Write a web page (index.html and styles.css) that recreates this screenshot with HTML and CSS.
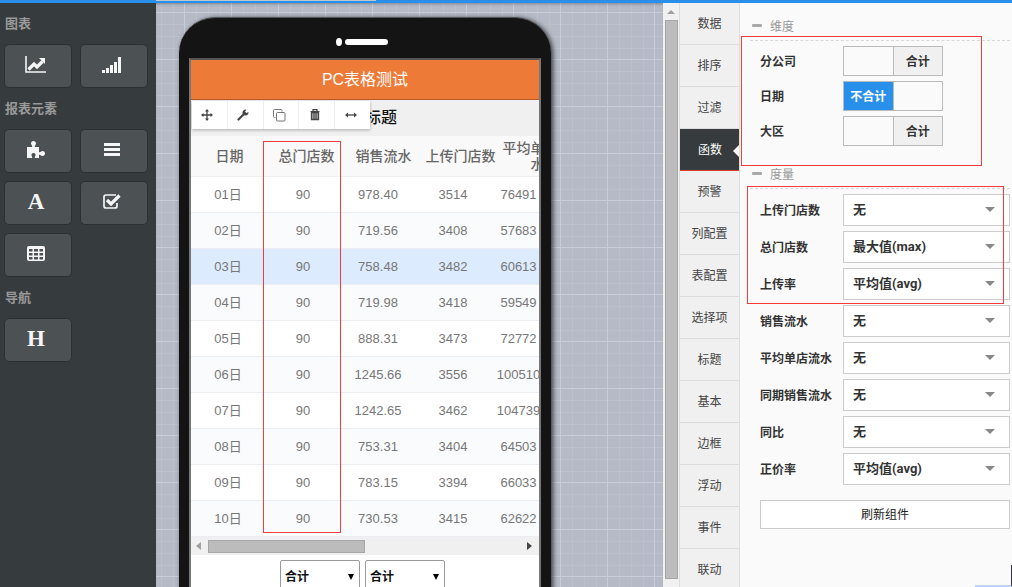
FILE: index.html
```html
<!DOCTYPE html>
<html lang="zh-CN">
<head>
<meta charset="utf-8">
<title>PC表格测试</title>
<link rel="stylesheet" href="styles.css">
</head>
<body>
<div class="topbar"><div class="topbar-progress"></div></div>
<div class="app">
  <aside class="sidebar">
    <h2 class="side-title">图表</h2>
    <div class="tools">
      <button class="tool" aria-label="折线图"><svg width="22" height="18" viewBox="0 0 22 18"><path d="M1 0v16h20" fill="none" stroke="#f5f5f5" stroke-width="1.6"/><path d="M3.500 13.500L9 8l3 3 5.500-5.500" fill="none" stroke="#f5f5f5" stroke-width="3.200"/><path d="M14 2h6v6z" fill="#f5f5f5"/></svg></button>
      <button class="tool" aria-label="柱状图"><svg width="20" height="18" viewBox="0 0 20 18" fill="#f5f5f5"><path d="M0 14h3v3H0zM4 12h3v5H4zM8 9h3v8H8zM12 6h3v11h-3zM16 1h3v16h-3z"/></svg></button>
    </div>
    <h2 class="side-title">报表元素</h2>
    <div class="tools">
      <button class="tool" aria-label="组件"><svg width="20" height="18" viewBox="0 0 20 18" fill="#f5f5f5"><path d="M1 6h5c1-1-1-2-1-3.500C5 1 6 0 7.500 0S10 1 10 2.500C10 4 8 5 9 6h4v5c1 1 2-1 3.500-1C18 10 19 11 19 12.500S18 15 16.500 15C15 15 14 13 13 14v3H9c-1-1 1-2 .5-3.500C9 11.500 6 11.500 5.500 13.500 5 15 7 16 6 17H1z"/></svg></button>
      <button class="tool" aria-label="列表"><svg width="18" height="16" viewBox="0 0 18 16" fill="#f5f5f5"><path d="M1 1h16v3H1zM1 6h16v3H1zM1 11h16v3H1z"/></svg></button>
      <button class="tool tool-glyph">A</button>
      <button class="tool" aria-label="选择"><svg width="20" height="18" viewBox="0 0 20 18"><path d="M14 2H4Q2 2 2 4v9q0 2 2 2h9q2 0 2-2v-3" fill="none" stroke="#f5f5f5" stroke-width="1.700"/><path d="M5 7l4 4 8.500-8.500" fill="none" stroke="#f5f5f5" stroke-width="3.200"/></svg></button>
      <button class="tool" aria-label="表格"><svg width="18" height="16" viewBox="0 0 18 16"><rect x="0" y="0" width="18" height="15" rx="2" fill="#f5f5f5"/><path d="M2 3h3.500v2.500H2zM7 3h4v2.500H7zM12.500 3H16v2.500h-3.500zM2 7h3.500v2.500H2zM7 7h4v2.500H7zM12.500 7H16v2.500h-3.500zM2 11h3.500v2.500H2zM7 11h4v2.500H7zM12.500 11H16v2.500h-3.500z" fill="#4c5154"/></svg></button>
    </div>
    <h2 class="side-title">导航</h2>
    <div class="tools">
      <button class="tool tool-glyph">H</button>
    </div>
  </aside>

  <main class="canvas">
    <div class="phone">
      <div class="speaker"><span class="speaker-dot"></span><span class="speaker-bar"></span></div>
      <div class="screen">
        <h1 class="page-title">PC表格测试</h1>
        <div class="widget">
          <div class="widget-title">标题</div>
          <div class="toolbar">
            <button aria-label="移动"><svg width="14" height="14" viewBox="0 0 14 14"><path d="M7 2v10M2 7h10" stroke="#444" stroke-width="1.300"/><path d="M7 1l2 2.500H5zM7 13l2-2.500H5zM1 7l2.500-2v4zM13 7l-2.500-2v4z" fill="#444"/></svg></button>
            <button aria-label="设置"><svg width="12" height="12" viewBox="0 0 12 12"><path d="M1.500 10.500L7 5" stroke="#444" stroke-width="2.200" stroke-linecap="round"/><path d="M9.500 .8A3 3 0 1 0 11.400 3L9.500 4 8 2.500z" fill="#444"/></svg></button>
            <button aria-label="复制"><svg width="14" height="14" viewBox="0 0 14 14" fill="none" stroke="#777"><path d="M3.500 9.500H2.500Q1.500 9.500 1.500 8.500V2.500Q1.500 1.500 2.500 1.500h6.500q1 0 1 1v1"/><rect x="4.500" y="4.500" width="8.500" height="8.500" rx="1" fill="#fff"/></svg></button>
            <button aria-label="删除"><svg width="10" height="12" viewBox="0 0 10 12"><path d="M3 2V.7h4V2M.5 2.500h9" fill="none" stroke="#444" stroke-width="1.200"/><path d="M1.500 3.500h7V10.500h-7z" fill="#aaa" stroke="#444" stroke-width="1.300"/><path d="M4 4v6M6 4v6" stroke="#444"/></svg></button>
            <button aria-label="宽度"><svg width="12" height="8" viewBox="0 0 12 8"><path d="M2 4h8" stroke="#444" stroke-width="1.300"/><path d="M0 4l3-2.500v5zM12 4L9 1.500v5z" fill="#444"/></svg></button>
          </div>
          <table class="grid grid-head">
            <thead><tr><th>日期</th><th>总门店数</th><th>销售流水</th><th>上传门店数</th><th>平均单店流水</th></tr></thead>
          </table>
          <table class="grid grid-body">
            <tbody>
              <tr><td>01日</td><td>90</td><td>978.40</td><td>3514</td><td>76491</td></tr>
              <tr><td>02日</td><td>90</td><td>719.56</td><td>3408</td><td>57683</td></tr>
              <tr class="selected"><td>03日</td><td>90</td><td>758.48</td><td>3482</td><td>60613</td></tr>
              <tr><td>04日</td><td>90</td><td>719.98</td><td>3418</td><td>59549</td></tr>
              <tr><td>05日</td><td>90</td><td>888.31</td><td>3473</td><td>72772</td></tr>
              <tr><td>06日</td><td>90</td><td>1245.66</td><td>3556</td><td>100510</td></tr>
              <tr><td>07日</td><td>90</td><td>1242.65</td><td>3462</td><td>104739</td></tr>
              <tr><td>08日</td><td>90</td><td>753.31</td><td>3404</td><td>64503</td></tr>
              <tr><td>09日</td><td>90</td><td>783.15</td><td>3394</td><td>66033</td></tr>
              <tr><td>10日</td><td>90</td><td>730.53</td><td>3415</td><td>62622</td></tr>
            </tbody>
          </table>
          <div class="hscroll"><span class="arrow arrow-left"></span><div class="hscroll-track"><div class="hscroll-thumb"></div></div><span class="arrow arrow-right"></span></div>
          <div class="mark mark-column"></div>
        </div>
        <div class="filters">
          <div class="picker"><select aria-label="汇总一"><option>合计</option></select></div>
          <div class="picker"><select aria-label="汇总二"><option>合计</option></select></div>
        </div>
      </div>
    </div>
  </main>

  <div class="vscroll"><span class="arrow arrow-up"></span><div class="vscroll-thumb"></div></div>

  <nav class="tabs">
    <button class="tab">数据</button>
    <button class="tab">排序</button>
    <button class="tab">过滤</button>
    <button class="tab active">函数</button>
    <button class="tab">预警</button>
    <button class="tab">列配置</button>
    <button class="tab">表配置</button>
    <button class="tab">选择项</button>
    <button class="tab">标题</button>
    <button class="tab">基本</button>
    <button class="tab">边框</button>
    <button class="tab">浮动</button>
    <button class="tab">事件</button>
    <button class="tab">联动</button>
  </nav>

  <section class="panel">
    <div class="group group-dims">
      <h3 class="group-title">维度</h3>
      <div class="row"><span class="row-label">分公司</span><label class="toggle"><input type="checkbox" aria-label="分公司"><span class="on"></span><span class="off">合计</span></label></div>
      <div class="row"><span class="row-label">日期</span><label class="toggle"><input type="checkbox" aria-label="日期" checked><span class="on">不合计</span><span class="off"></span></label></div>
      <div class="row"><span class="row-label">大区</span><label class="toggle"><input type="checkbox" aria-label="大区"><span class="on"></span><span class="off">合计</span></label></div>
      <div class="mark mark-dims"></div>
    </div>
    <div class="group group-measures">
      <h3 class="group-title">度量</h3>
      <div class="row"><label class="row-label" for="m1">上传门店数</label><div class="choice"><select id="m1"><option>无</option></select></div></div>
      <div class="row"><label class="row-label" for="m2">总门店数</label><div class="choice"><select id="m2"><option>最大值(max)</option></select></div></div>
      <div class="row"><label class="row-label" for="m3">上传率</label><div class="choice"><select id="m3"><option>平均值(avg)</option></select></div></div>
      <div class="row"><label class="row-label" for="m4">销售流水</label><div class="choice"><select id="m4"><option>无</option></select></div></div>
      <div class="row"><label class="row-label" for="m5">平均单店流水</label><div class="choice"><select id="m5"><option>无</option></select></div></div>
      <div class="row"><label class="row-label" for="m6">同期销售流水</label><div class="choice"><select id="m6"><option>无</option></select></div></div>
      <div class="row"><label class="row-label" for="m7">同比</label><div class="choice"><select id="m7"><option>无</option></select></div></div>
      <div class="row"><label class="row-label" for="m8">正价率</label><div class="choice"><select id="m8"><option>平均值(avg)</option></select></div></div>
      <div class="mark mark-measures"></div>
    </div>
    <button class="refresh">刷新组件</button>
    <div class="corner"></div>
  </section>
</div>
</body>
</html>
```

FILE: styles.css
```css
* { box-sizing: border-box; }

body {
  margin: 0;
  height: 100vh;
  overflow: hidden;
  display: flex;
  flex-direction: column;
  font-family: "Liberation Sans", "Noto Sans CJK SC", sans-serif;
  font-size: 12px;
  color: #333;
}

button, select, input { font: inherit; color: inherit; margin: 0; }
button { padding: 0; border: 0; background: none; }
h1, h2, h3 { margin: 0; }

.topbar { height: 3px; background: #2890ea; flex: none; padding-left: 156px; }
.topbar-progress { width: 220px; height: 1px; background: #c4c8cc; }
.app { flex: 1; min-height: 0; display: flex; }

/* left palette */
.sidebar { width: 156px; flex: none; background: #363b3e; padding: 0 4px; }
.side-title {
  height: 41px;
  line-height: 42px;
  padding-left: 1px;
  font-size: 13px;
  font-weight: bold;
  color: #999;
}
.tools { display: grid; grid-template-columns: 68px 68px; gap: 8px; }
.tool {
  height: 44px;
  padding: 0 4px 2px 0;
  display: flex;
  align-items: center;
  justify-content: center;
  background: #4c5154;
  border: 1px solid #2c3033;
  border-radius: 5px;
}
.tool-glyph {
  font-family: "Liberation Serif", serif;
  font-size: 23px;
  font-weight: bold;
  color: #f5f5f5;
}

/* design surface */
.canvas {
  flex: 1;
  min-width: 0;
  overflow: hidden;
  padding: 14px 0 0 23px;
  background-color: #b5bac6;
  background-image:
    linear-gradient(#c8cddb 1px, transparent 1px),
    linear-gradient(90deg, #c8cddb 1px, transparent 1px),
    repeating-linear-gradient(#bbc0cb 0 1px, transparent 1px 12px),
    repeating-linear-gradient(90deg, #bbc0cb 0 1px, transparent 1px 12px);
  background-size: 47px 47px;
  background-position: 28px 9px;
  box-shadow: inset 0 3px 3px -2px rgba(0, 0, 0, 0.3);
}
.phone {
  width: 372px;
  height: 700px;
  padding: 0 10px;
  background: #141414;
  border: 1px solid #555;
  border-width: 1px 0;
  border-radius: 36px;
  box-shadow: 2px 1px 5px rgba(0, 0, 0, 0.7);
}
.speaker {
  height: 40px;
  padding: 8px 7px 0 0;
  display: flex;
  align-items: center;
  justify-content: center;
  gap: 3px;
}
.speaker-dot { width: 6px; height: 8px; border-radius: 50%; background: #fff; }
.speaker-bar { width: 43px; height: 6px; border-radius: 3px; background: #fff; }
.screen { border: 2px solid #777; border-top-color: #555; background: #fff; height: 640px; }
.page-title {
  height: 40px;
  line-height: 40px;
  background: #ee7a38;
  border-bottom: 1px solid #b65c28;
  color: #fff;
  font-size: 16px;
  font-weight: normal;
  text-align: center;
}
.widget { position: relative; overflow: hidden; }
.widget-title {
  height: 36px;
  line-height: 36px;
  padding-left: 174px;
  background: #f0f0f0;
  color: #111;
  font-size: 16px;
  font-weight: 500;
}
.toolbar {
  position: absolute;
  top: 1px;
  left: 1px;
  width: 178px;
  height: 28px;
  display: flex;
  background: #fff;
  box-shadow: 0 1px 3px rgba(0, 0, 0, 0.3);
}
.toolbar button {
  flex: 1;
  display: flex;
  align-items: center;
  justify-content: center;
  padding-right: 4px;
}
.toolbar button + button { border-left: 1px solid #eee; }

.grid { border-collapse: separate; border-spacing: 0; table-layout: fixed; }
.grid-head { width: 385px; background: #f9f9f9; }
.grid-head th {
  height: 41px;
  padding: 0;
  border-bottom: 1px solid #eee;
  font-size: 14px;
  line-height: 16px;
  font-weight: 500;
  color: #666;
}
.grid-body { width: 356px; }
.grid-body td {
  width: 75px;
  height: 36px;
  padding: 0 1px 0 0;
  border-bottom: 1px solid #eaeef2;
  font-size: 13px;
  line-height: 16px;
  color: #777;
  text-align: center;
}
.grid-body td:last-child { width: 56px; }
.grid-body tr:nth-child(even) { background: #fafbfd; }
.grid-body tr.selected { background: #dcebfd; }

.hscroll { height: 18px; display: flex; align-items: center; background: #f0f0f0; padding: 0 7px 0 5px; }
.hscroll-track { flex: 1; padding-left: 7px; }
.hscroll-thumb { width: 157px; height: 13px; background: #bcbcbc; border: 1px solid #a6a6a6; }
.arrow { width: 0; height: 0; border: 4px solid transparent; }
.arrow-left { border-right: 5px solid #a0a0a0; border-left: 0; }
.arrow-right { border-left: 5px solid #444; border-right: 0; }
.arrow-up { border-bottom-color: #a0a0a0; border-top: 0; }

.filters { display: flex; justify-content: center; gap: 5px; padding: 5px 5px 0 0; }
.picker { position: relative; }
.picker select {
  display: block;
  appearance: none;
  width: 80px;
  height: 34px;
  padding: 0 4px;
  border: 1px solid #999;
  border-radius: 2px;
  background: #fff;
  color: #111;
  font-weight: bold;
}
.picker::after, .choice::after {
  content: "";
  position: absolute;
  pointer-events: none;
  border: 0 solid transparent;
}
.picker::after { top: 14px; right: 6px; border-width: 6px 3px 0; border-top-color: #000; }
.choice::after { top: 13px; right: 15px; border-width: 5px 5px 0; border-top-color: #888; }

.vscroll {
  width: 17px;
  flex: none;
  display: flex;
  flex-direction: column;
  align-items: center;
  padding: 7px 2px 8px;
  background: #f1f1f1;
  border-right: 1px solid #ddd;
}
.vscroll-thumb { flex: 1; width: 13px; margin-top: 6px; background: #bcbcbc; border: 1px solid #a6a6a6; }

/* property tabs */
.tabs { width: 60px; flex: none; overflow: hidden; background: #f0f0f0; border-right: 1px solid #ddd; }
.tab {
  position: relative;
  display: block;
  width: 100%;
  height: 42px;
  padding-bottom: 3px;
  border-bottom: 1px solid #ddd;
  color: #444;
}
.tab.active { width: 60px; background: #363b3e; border-bottom-color: #dd4030; color: #fff; }
.tab.active::after {
  content: "";
  position: absolute;
  top: 15px;
  right: 0;
  border: 7px solid transparent;
  border-right-color: #fafafa;
  border-left: 0;
}

/* property panel */
.panel { position: relative; width: 272px; flex: none; background: #fafafa; padding: 9px 2px 0 10px; }
.group { position: relative; }
.group-dims { height: 148px; }
.group-title {
  display: flex;
  align-items: center;
  gap: 8px;
  height: 29px;
  margin-bottom: 5px;
  padding: 0 0 2px 2px;
  border-bottom: 1px dashed #d8d8d8;
  font-size: 12px;
  font-weight: normal;
  color: #999;
}
.group-title::before { content: ""; width: 10px; height: 3px; border-radius: 1px; background: #aaa; }
.row { display: flex; align-items: center; margin-bottom: 5px; padding-left: 10px; }
.row-label { width: 83px; flex: none; padding-bottom: 2px; font-weight: bold; color: #333; white-space: nowrap; }
.toggle {
  position: relative;
  width: 100px;
  height: 30px;
  display: flex;
  border: 1px solid #bbb;
  font-weight: bold;
}
.toggle input { position: absolute; inset: 0; width: 100%; height: 100%; opacity: 0; }
.toggle span { flex: 1; display: flex; align-items: center; justify-content: center; padding-bottom: 1px; }
.toggle .off { background: #f0f0f0; border-left: 1px solid #bbb; }
.toggle input:checked ~ .on { background: #2890ea; color: #fff; }
.toggle input:checked ~ .off { background: #fafafa; }
.choice { position: relative; flex: 1; }
.choice select {
  display: block;
  appearance: none;
  width: 100%;
  height: 32px;
  padding: 0 9px 2px;
  border: 1px solid #ccc;
  border-radius: 0;
  background: #fff;
  font-family: Roboto, "Noto Sans CJK SC", sans-serif;
  font-size: 13px;
  font-weight: bold;
  color: #333;
}
.refresh {
  display: block;
  width: calc(100% - 10px);
  height: 29px;
  margin: 15px 0 0 10px;
  padding-bottom: 2px;
  background: #fff;
  border: 1px solid #ccc;
  color: #222;
}
.corner {
  position: absolute;
  right: 0;
  bottom: 0;
  width: 37px;
  height: 22px;
  border-right: 1px solid #334;
  border-bottom: 2px solid #c0d2f8;
}

/* red outlines */
.mark { position: absolute; border: 1px solid #f53b3b; pointer-events: none; }
.mark-column { left: 72px; top: 41px; width: 78px; height: 392px; }
.mark-dims { left: -9px; top: 24px; width: 241px; height: 130px; }
.mark-measures { left: -3px; top: 26px; width: 257px; height: 118px; }
```
